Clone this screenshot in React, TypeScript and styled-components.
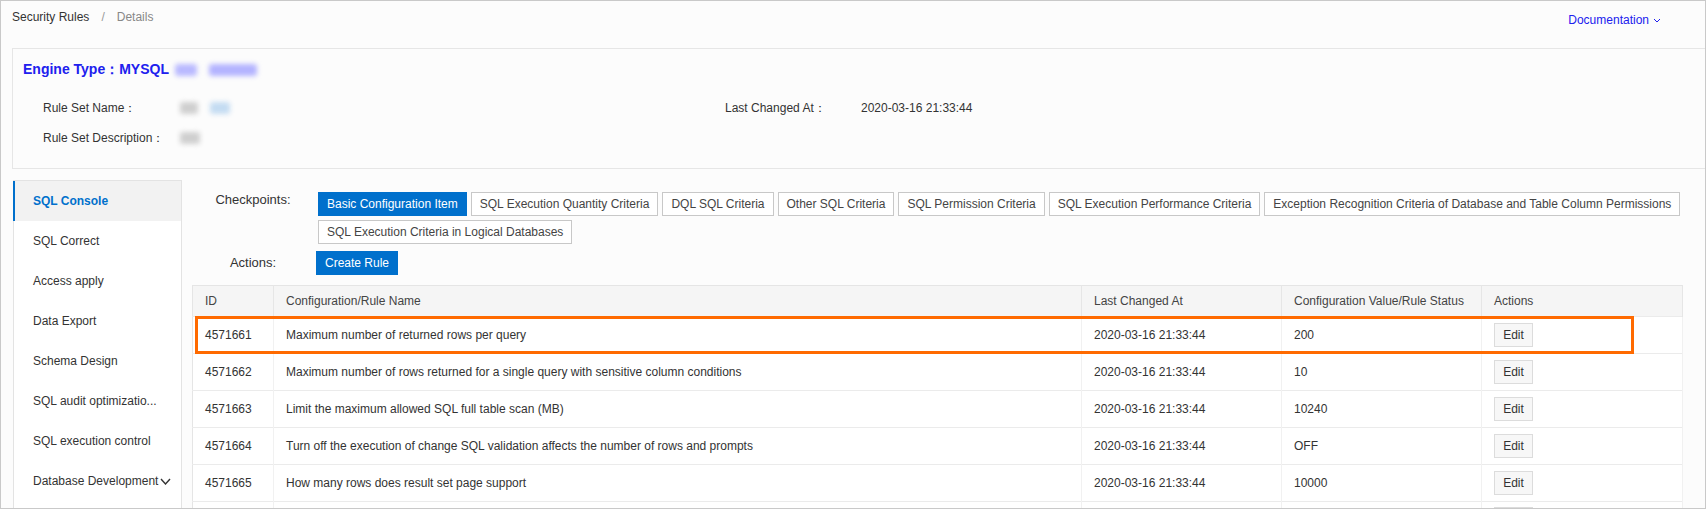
import React from 'react'
import styled, { createGlobalStyle } from 'styled-components'

const GlobalStyle = createGlobalStyle`
  html, body {
    margin: 0;
    padding: 0;
    background: #fff;
  }
  body {
    font-family: "Liberation Sans", Arial, sans-serif;
    font-size: 12px;
    color: #333;
  }
  * {
    box-sizing: border-box;
  }
`

const BLUE = '#0070cc'
const LINK = '#2020ee'

const UI = {
  Frame: styled.div`
    width: 1706px;
    height: 509px;
    border: 1px solid #c9c9c9;
    background: #fcfcfc;
    overflow: hidden;
  `,
  TopBar: styled.header`
    display: flex;
    justify-content: space-between;
    align-items: flex-start;
    height: 47px;
    padding: 0 44px 0 11px;
  `,
  Breadcrumb: styled.nav`
    margin-top: 8px;
    line-height: 16px;
    color: #333;
  `,
  Crumb: styled.span<{ $muted?: boolean }>`
    color: ${({ $muted }) => ($muted ? '#888' : '#333')};
  `,
  Sep: styled.span`
    margin: 0 12px;
    color: #999;
  `,
  DocLink: styled.a`
    display: inline-flex;
    align-items: center;
    gap: 4px;
    margin-top: 11px;
    line-height: 16px;
    color: ${LINK};
    text-decoration: none;
  `,
  Body: styled.div`
    padding-left: 11px;
  `,
  InfoCard: styled.section`
    height: 121px;
    border: 1px solid #e6e6e6;
    border-right: none;
    padding: 11px 0 0 10px;
  `,
  EngineTitle: styled.h2`
    display: flex;
    align-items: center;
    margin: 0;
    height: 20px;
    font-size: 14px;
    font-weight: bold;
    color: ${LINK};
  `,
  Blur: styled.span<{ $color: string; $w: number }>`
    display: inline-block;
    width: ${({ $w }) => $w}px;
    height: 12px;
    margin-right: 12px;
    border-radius: 3px;
    background: ${({ $color }) => $color};
    filter: blur(2.5px);
  `,
  InfoGrid: styled.dl`
    display: grid;
    grid-template-columns: 137px 545px 136px 1fr;
    grid-auto-rows: 30px;
    align-items: center;
    margin: 13px 0 0 20px;
  `,
  Term: styled.dt`
    color: #333;
  `,
  Value: styled.dd`
    display: flex;
    align-items: center;
    margin: 0;
    color: #333;
  `,
  Layout: styled.div`
    display: flex;
    margin-top: 11px;
  `,
  Sidebar: styled.ul`
    flex: none;
    width: 169px;
    height: 340px;
    margin: 0 0 0 1px;
    padding: 0;
    list-style: none;
    background: #fff;
    border: 1px solid #e3e3e3;
    border-bottom: none;
  `,
  NavItem: styled.li<{ $active?: boolean }>`
    display: flex;
    align-items: center;
    gap: 2px;
    height: 40px;
    margin-left: -1px;
    padding-left: 18px;
    border-left: 2px solid ${({ $active }) => ($active ? BLUE : 'transparent')};
    background: ${({ $active }) => ($active ? '#f2f2f2' : 'transparent')};
    color: ${({ $active }) => ($active ? BLUE : '#333')};
    font-weight: ${({ $active }) => ($active ? 'bold' : 'normal')};
    white-space: nowrap;
  `,
  Main: styled.main`
    flex: 1;
    min-width: 0;
    padding: 12px 6px 0 10px;
  `,
  ToolRow: styled.div<{ $align: string; $gapTop: number }>`
    display: flex;
    align-items: ${({ $align }) => $align};
    margin-top: ${({ $gapTop }) => $gapTop}px;
    padding-left: 8px;
  `,
  ToolLabel: styled.span`
    flex: none;
    width: 106px;
    font-size: 13px;
    line-height: 16px;
    text-align: center;
    color: #333;
  `,
  ButtonGroup: styled.div<{ $offset: number }>`
    display: flex;
    flex-wrap: wrap;
    gap: 4px 4px;
    flex: 1;
    margin-left: ${({ $offset }) => $offset}px;
  `,
  TagButton: styled.button<{ $primary?: boolean }>`
    height: 24px;
    padding: 0 8px;
    font-family: inherit;
    font-size: 12px;
    border: 1px solid ${({ $primary }) => ($primary ? BLUE : '#c8c8c8')};
    background: ${({ $primary }) => ($primary ? BLUE : '#fff')};
    color: ${({ $primary }) => ($primary ? '#fff' : '#444')};
    cursor: pointer;
  `,
  TableWrap: styled.div`
    position: relative;
    width: 1490px;
    margin-top: 10px;
  `,
  Table: styled.table`
    width: 1490px;
    border-collapse: collapse;
    table-layout: fixed;
    background: #fff;
    border: 1px solid #e5e5e5;
    th {
      height: 31px;
      padding: 0 12px;
      background: #f5f5f5;
      text-align: left;
      font-weight: normal;
      color: #444;
      border-right: 1px solid #e6e6e6;
    }
    td {
      height: 37px;
      padding: 0 12px;
      border-top: 1px solid #ebebeb;
      border-right: 1px solid #f1f1f1;
      color: #333;
      white-space: nowrap;
    }
  `,
  EditButton: styled.button`
    width: 39px;
    height: 24px;
    padding: 0;
    font-family: inherit;
    font-size: 12px;
    color: #333;
    background: #f7f7f7;
    border: 1px solid #dcdcdc;
  `,
  Highlight: styled.div`
    position: absolute;
    top: 31px;
    left: 3px;
    width: 1439px;
    height: 38px;
    border: 3px solid #ff6a00;
    pointer-events: none;
  `
}

const Chevron = ({ color, w, h, sw }: { color: string; w: number; h: number; sw: number }) => (
  <svg width={w} height={h} viewBox={`0 0 ${w} ${h}`} fill="none">
    <polyline points={`1,1 ${w / 2},${h - 1} ${w - 1},1`} stroke={color} strokeWidth={sw} />
  </svg>
)

const navItems = [
  { label: 'SQL Console', active: true },
  { label: 'SQL Correct' },
  { label: 'Access apply' },
  { label: 'Data Export' },
  { label: 'Schema Design' },
  { label: 'SQL audit optimizatio...' },
  { label: 'SQL execution control' },
  { label: 'Database Development', more: true }
]

const checkpoints = [
  'Basic Configuration Item',
  'SQL Execution Quantity Criteria',
  'DQL SQL Criteria',
  'Other SQL Criteria',
  'SQL Permission Criteria',
  'SQL Execution Performance Criteria',
  'Exception Recognition Criteria of Database and Table Column Permissions',
  'SQL Execution Criteria in Logical Databases'
]

const rules = [
  { id: '4571661', name: 'Maximum number of returned rows per query', value: '200' },
  { id: '4571662', name: 'Maximum number of rows returned for a single query with sensitive column conditions', value: '10' },
  { id: '4571663', name: 'Limit the maximum allowed SQL full table scan (MB)', value: '10240' },
  { id: '4571664', name: 'Turn off the execution of change SQL validation affects the number of rows and prompts', value: 'OFF' },
  { id: '4571665', name: 'How many rows does result set page support', value: '10000' }
]

const CHANGED = '2020-03-16 21:33:44'

export default function App () {
  return (
    <>
      <GlobalStyle />
      <UI.Frame>
        <UI.TopBar>
          <UI.Breadcrumb>
            <UI.Crumb>Security Rules</UI.Crumb>
            <UI.Sep>/</UI.Sep>
            <UI.Crumb $muted>Details</UI.Crumb>
          </UI.Breadcrumb>
          <UI.DocLink href="#">
            Documentation
            <Chevron color={LINK} w={8} h={5} sw={1} />
          </UI.DocLink>
        </UI.TopBar>

        <UI.Body>
          <UI.InfoCard>
            <UI.EngineTitle>
              Engine Type：MYSQL
              <span style={{ width: 6 }} />
              <UI.Blur $color="#b9b9ff" $w={22} />
              <UI.Blur $color="#b3b3ff" $w={48} />
            </UI.EngineTitle>
            <UI.InfoGrid>
              <UI.Term>Rule Set Name：</UI.Term>
              <UI.Value>
                <UI.Blur $color="#cfcfcf" $w={18} />
                <UI.Blur $color="#c4dcf2" $w={20} />
              </UI.Value>
              <UI.Term>Last Changed At：</UI.Term>
              <UI.Value>{CHANGED}</UI.Value>
              <UI.Term>Rule Set Description：</UI.Term>
              <UI.Value>
                <UI.Blur $color="#cfcfcf" $w={20} />
              </UI.Value>
            </UI.InfoGrid>
          </UI.InfoCard>

          <UI.Layout>
            <UI.Sidebar>
              {navItems.map(item => (
                <UI.NavItem key={item.label} $active={item.active}>
                  {item.label}
                  {item.more && <Chevron color="#333" w={11} h={7} sw={1.4} />}
                </UI.NavItem>
              ))}
            </UI.Sidebar>

            <UI.Main>
              <UI.ToolRow $align="flex-start" $gapTop={0}>
                <UI.ToolLabel>Checkpoints:</UI.ToolLabel>
                <UI.ButtonGroup $offset={12}>
                  {checkpoints.map((c, i) => (
                    <UI.TagButton key={c} $primary={i === 0}>{c}</UI.TagButton>
                  ))}
                </UI.ButtonGroup>
              </UI.ToolRow>
              <UI.ToolRow $align="center" $gapTop={7}>
                <UI.ToolLabel>Actions:</UI.ToolLabel>
                <UI.ButtonGroup $offset={10}>
                  <UI.TagButton $primary>Create Rule</UI.TagButton>
                </UI.ButtonGroup>
              </UI.ToolRow>

              <UI.TableWrap>
                <UI.Table>
                  <colgroup>
                    <col style={{ width: 81 }} />
                    <col style={{ width: 808 }} />
                    <col style={{ width: 200 }} />
                    <col style={{ width: 200 }} />
                    <col style={{ width: 201 }} />
                  </colgroup>
                  <thead>
                    <tr>
                      <th>ID</th>
                      <th>Configuration/Rule Name</th>
                      <th>Last Changed At</th>
                      <th>Configuration Value/Rule Status</th>
                      <th>Actions</th>
                    </tr>
                  </thead>
                  <tbody>
                    {rules.map(r => (
                      <tr key={r.id}>
                        <td>{r.id}</td>
                        <td>{r.name}</td>
                        <td>{CHANGED}</td>
                        <td>{r.value}</td>
                        <td><UI.EditButton>Edit</UI.EditButton></td>
                      </tr>
                    ))}
                    {/* next row, only its top edge shows above the fold */}
                    <tr>
                      <td />
                      <td />
                      <td />
                      <td />
                      <td><UI.EditButton aria-label="Edit" /></td>
                    </tr>
                  </tbody>
                </UI.Table>
                <UI.Highlight />
              </UI.TableWrap>
            </UI.Main>
          </UI.Layout>
        </UI.Body>
      </UI.Frame>
    </>
  )
}
